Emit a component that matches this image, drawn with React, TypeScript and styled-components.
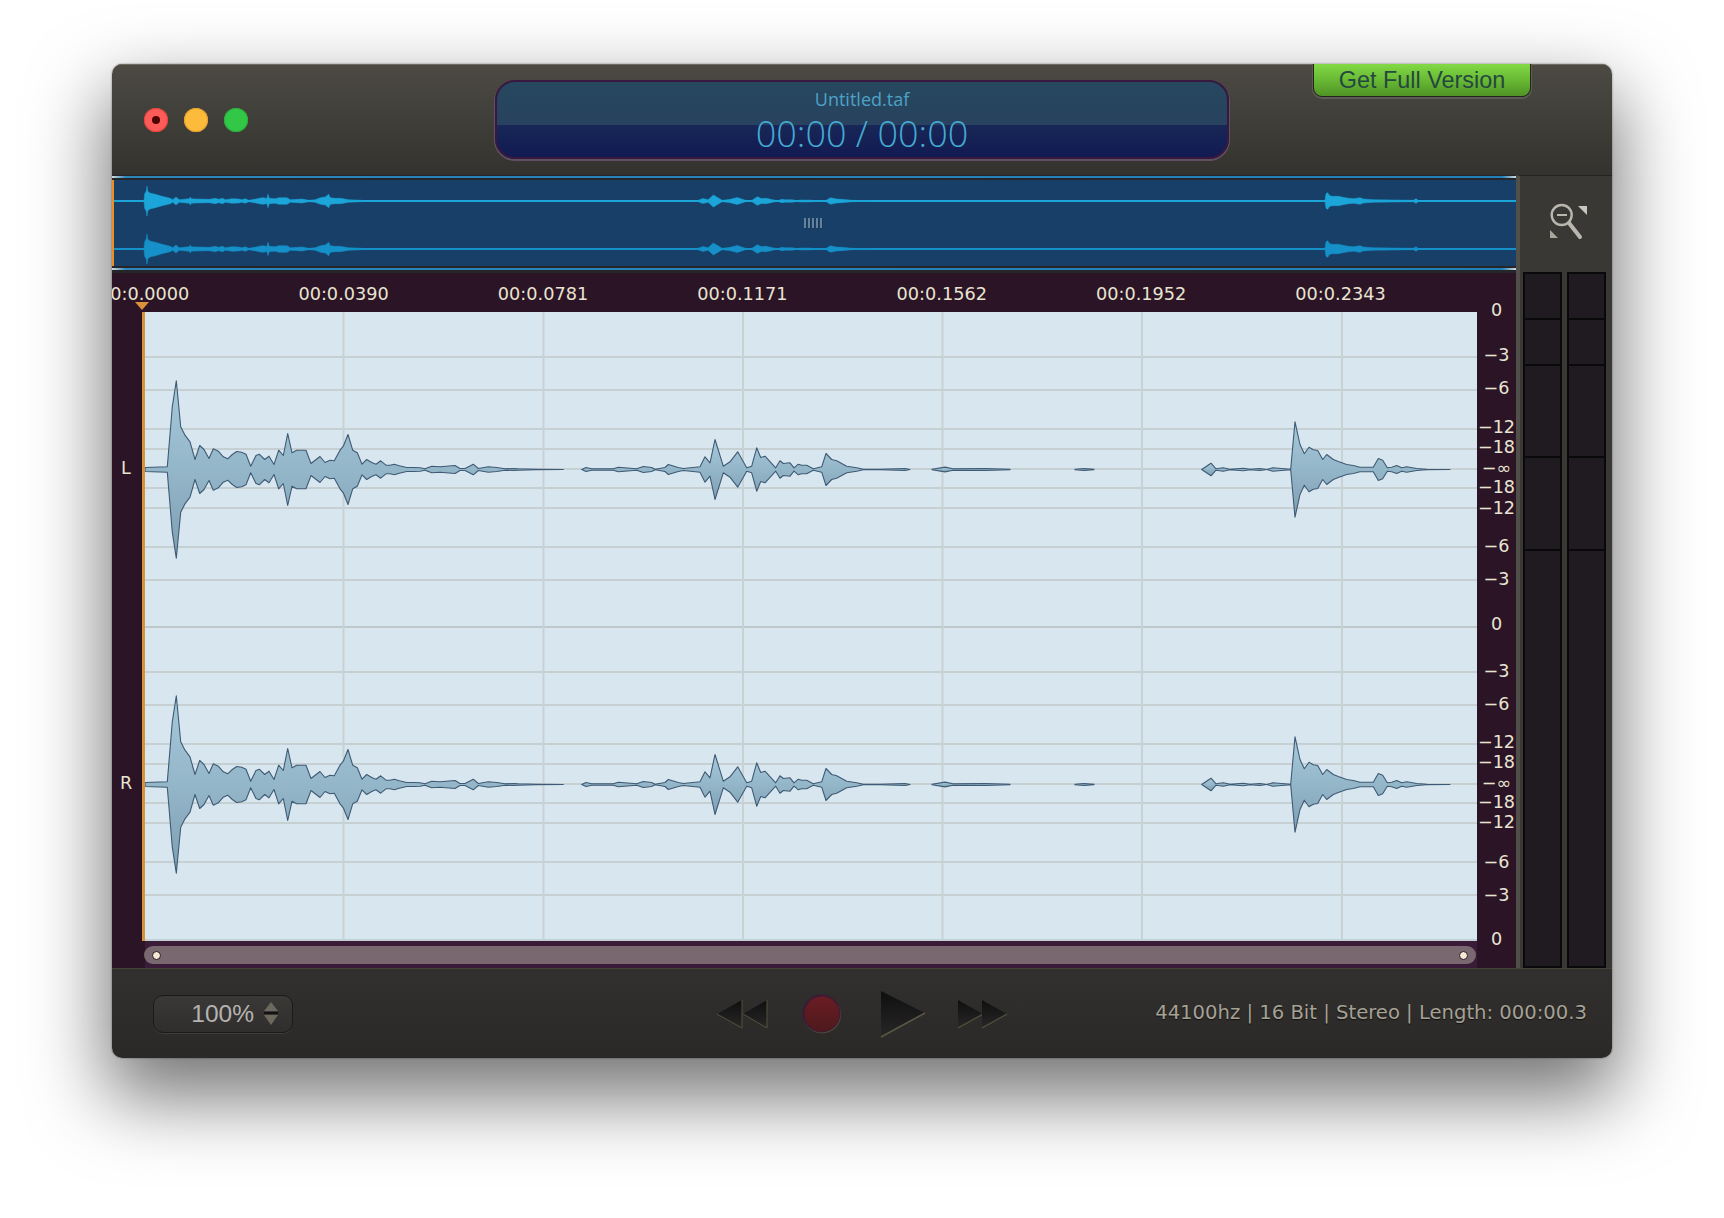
import React from 'react';
import styled, { createGlobalStyle } from 'styled-components';

const Global = createGlobalStyle`
  html, body { margin: 0; padding: 0; background: #fff; }
  #root { width: 1724px; height: 1218px; overflow: hidden; }
`;

const Page = styled.div`
  box-sizing: border-box;
  width: 1724px;
  height: 1218px;
  padding: 64px 112px;
  overflow: hidden;
  background: #fff;
`;

const Window = styled.div`
  width: 1500px;
  height: 994px;
  border-radius: 10px;
  overflow: hidden;
  display: flex;
  flex-direction: column;
  box-shadow: 0 34px 76px 6px rgba(0, 0, 0, 0.54), 0 0 2px rgba(0, 0, 0, 0.5);
  font-family: 'DejaVu Sans', sans-serif;
`;

const TitleBar = styled.header`
  flex: 0 0 111px;
  display: flex;
  background: linear-gradient(#4c4a43 0%, #45433d 30%, #34322e 100%);
  box-shadow: inset 0 1px 0 #6f6c64;
`;

const Lights = styled.div`
  display: flex;
  gap: 16px;
  padding: 44px 0 0 32px;
  width: 136px;
  box-sizing: content-box;
`;

const Light = styled.span<{ $c: string; $b: string }>`
  width: 24px;
  height: 24px;
  border-radius: 50%;
  background: ${(p) => p.$c};
  box-shadow: inset 0 0 0 1px ${(p) => p.$b};
  display: flex;
  align-items: center;
  justify-content: center;
`;

const LightDot = styled.i`
  width: 8px;
  height: 8px;
  border-radius: 50%;
  background: #4d0404;
`;

const Display = styled.div`
  box-sizing: border-box;
  width: 734px;
  height: 79px;
  margin: 16px 0 0 215px;
  border-radius: 20px;
  border: 2px solid #38183f;
  box-shadow: 0 1px 0 1px #5f5163;
  background: linear-gradient(#26485f 0%, #28425f 57%, #172757 57.5%, #121a52 100%);
  display: flex;
  flex-direction: column;
  align-items: center;
  overflow: hidden;
`;

const FileName = styled.div`
  margin-top: 7px;
  font: 18px/21px 'Open Sans', sans-serif;
  color: #4ea2c6;
`;

const TimeText = styled.div`
  margin-top: 2px;
  font: 300 36px/44px 'Open Sans', sans-serif;
  color: #45aad2;
`;

const FullButton = styled.div`
  box-sizing: border-box;
  width: 218px;
  height: 33px;
  margin-left: 84px;
  border: 1px solid #23241e;
  border-top: 0;
  border-radius: 0 0 9px 9px;
  box-shadow: 0 1px 0 1px #5d5b52;
  background: linear-gradient(#82d945 0%, #69b934 50%, #4f9326 100%);
  color: #24483f;
  font: 23.4px/33px 'Liberation Sans', sans-serif;
  text-align: center;
`;

const Middle = styled.div`
  flex: 0 0 793px;
  min-height: 0;
  display: flex;
`;

const MainCol = styled.div`
  width: 1404px;
  display: flex;
  flex-direction: column;
`;

const Overview = styled.div`
  flex: 0 0 98px;
  display: flex;
  flex-direction: column;
  background: #26262a;
  padding-top: 1px;
  box-sizing: border-box;
`;

const Rail = styled.div`
  flex: 0 0 2px;
  background: linear-gradient(90deg, #d5dadb 0, #2a86bb 14px, #2080b8 calc(100% - 14px), #d5dadb 100%);
`;

const OverviewBody = styled.div`
  position: relative;
  flex: 0 0 86px;
  margin: 2px 0;
  background: #183f68;
  border-left: 2px solid #f08c20;
`;

const Grip = styled.div`
  position: absolute;
  left: 690px;
  top: 38px;
  display: flex;
  gap: 2px;
`;

const GripBar = styled.i`
  width: 2px;
  height: 10px;
  background: #65829c;
  box-shadow: 1px 1px 0 #15375a;
`;

const OverviewSvg = styled.svg`
  display: block;
  width: 1402px;
  height: 86px;
`;

const Panel = styled.div`
  flex: 1;
  display: grid;
  grid-template-columns: 33px 1332px 39px;
  grid-template-rows: 39px 656px;
  background: #2a1425;
`;

const Ruler = styled.div`
  grid-column: 1 / 3;
  grid-row: 1;
  overflow: hidden;
  position: relative;
  display: flex;
  color: #e9e4d2;
  font-size: 17.7px;
  line-height: 39px;
`;

const Ticks = styled.div`
  display: flex;
  margin-left: -67.5px;
  padding-top: 2px;
`;

const Tick = styled.span`
  flex: 0 0 199.4px;
  text-align: center;
  white-space: nowrap;
`;

const PlayheadMark = styled.i`
  position: absolute;
  left: 23px;
  bottom: 2px;
  width: 0;
  height: 0;
  border-left: 7px solid transparent;
  border-right: 7px solid transparent;
  border-top: 8px solid #d9923a;
`;

const DbCol = styled.div`
  grid-column: 3;
  grid-row: 1 / 3;
  display: flex;
  flex-direction: column;
  align-items: center;
  padding-top: 27px;
  color: #e9e4d2;
  font-size: 17.6px;
`;

const DbLabel = styled.span`
  height: 20px;
  line-height: 20px;
  white-space: nowrap;
`;

const Gutter = styled.div`
  grid-column: 1;
  grid-row: 2;
  box-sizing: border-box;
  height: 629px;
  border-right: 3px solid #d9923a;
  display: flex;
  flex-direction: column;
  align-items: center;
  padding: 146px 2px 0 0;
  color: #e9e4d2;
  font-size: 17.6px;
  line-height: 20px;
`;

const ChannelLabel = styled.span<{ $gap?: number }>`
  margin-top: ${(p) => p.$gap ?? 0}px;
`;

const Center = styled.div`
  grid-column: 2;
  grid-row: 2;
  display: flex;
  flex-direction: column;
`;

const PlotSvg = styled.svg`
  display: block;
  width: 1332px;
  height: 629px;
  background: #d8e6ef;
`;

const ScrollTrack = styled.div`
  flex: 1;
  background: #3a1b38;
  padding: 5px 0 4px;
  box-sizing: border-box;
  display: flex;
`;

const ScrollThumb = styled.div`
  flex: 1;
  height: 18px;
  margin: 0 1px 0 -1px;
  border-radius: 9px;
  background: #7a6870;
  display: flex;
  justify-content: space-between;
  align-items: center;
  padding: 0 8px;
`;

const ThumbDot = styled.i`
  box-sizing: border-box;
  width: 9px;
  height: 9px;
  border-radius: 50%;
  background: #f5ead4;
  border: 1.5px solid #251420;
`;

const Side = styled.aside`
  width: 96px;
  box-sizing: border-box;
  background: #3a3835;
  border-left: 4px solid #514f49;
  border-top: 1px solid #24231f;
  display: flex;
  flex-direction: column;
  padding: 0 6px 0 3px;
`;

const ZoomBox = styled.div`
  flex: 0 0 96px;
  box-sizing: border-box;
  padding: 0 0 4px 7px;
  display: flex;
  align-items: center;
  justify-content: center;
`;

const Meters = styled.div`
  flex: 1;
  display: flex;
  gap: 5px;
`;

const Meter = styled.div`
  flex: 1;
  box-sizing: border-box;
  border: 2px solid #0a090a;
  display: flex;
  flex-direction: column;
  background: #0a090a;
  gap: 2px;
`;

const MeterSeg = styled.div<{ $h?: number }>`
  ${(p) => (p.$h ? `flex: 0 0 ${p.$h}px;` : 'flex: 1;')}
  background: #201b21;
`;

const BottomBar = styled.footer`
  flex: 0 0 90px;
  box-sizing: border-box;
  display: flex;
  align-items: center;
  background: linear-gradient(#31302e, #2a2927);
  border-top: 1px solid #45423a;
  padding: 0 25px 0 41px;
`;

const Stepper = styled.div`
  box-sizing: border-box;
  width: 140px;
  height: 38px;
  border-radius: 10px;
  border: 1px solid #1b1a19;
  background: linear-gradient(#3a3937, #2f2e2c);
  box-shadow: 0 1px 0 #3f3d39;
  color: #b5b3b0;
  font: 24.5px/36px 'Liberation Sans', sans-serif;
  display: flex;
  align-items: center;
  justify-content: flex-end;
  padding-right: 13px;
  gap: 9px;
`;

const Transport = styled.div`
  display: flex;
  align-items: center;
  margin-left: 423px;
  padding-top: 1px;
`;

const TransportIcon = styled.svg<{ $ml?: number }>`
  display: block;
  margin-left: ${(p) => p.$ml ?? 0}px;
`;

const Status = styled.div`
  margin-left: auto;
  margin-bottom: 2px;
  color: #a6a195;
  font-size: 19.6px;
  white-space: nowrap;
  text-shadow: 0 1px 1px #111;
`;

type P = [number, number];
const from = (x0: number, c: number, pts: number[][]): P[] =>
  pts.map(([x, y]) => [x0 + x / 3, (c - y) / 3]);

const envelope: P[] = [
  ...from(130, 298, [
    [45, 292], [112, 290], [127, 110], [139, 32], [152, 170], [165, 195], [180, 215], [195, 268], [209, 226], [222, 238],
    [237, 265], [250, 236], [265, 243], [280, 260], [293, 266], [307, 253], [320, 244], [335, 246], [348, 252], [362, 288],
    [378, 256], [388, 252], [404, 268], [417, 258], [432, 283], [446, 240], [460, 256], [473, 190], [486, 248], [500, 240],
    [528, 240], [543, 280], [570, 259], [585, 277], [600, 270], [613, 272], [630, 240], [640, 228], [654, 193], [668, 240],
    [682, 248], [696, 282], [710, 268], [725, 277], [738, 282], [752, 272], [768, 285], [780, 285], [793, 282], [808, 287],
    [830, 292], [850, 292], [870, 293], [885, 296], [905, 288], [930, 290], [975, 286], [990, 295], [1005, 295], [1030, 282],
    [1045, 295], [1075, 290], [1100, 292], [1125, 296], [1150, 295], [1165, 296],
  ]),
  ...from(530, 148, [
    [20, 147], [100, 148], [155, 148], [168, 142], [185, 146], [250, 146], [265, 141], [320, 146], [340, 139], [365, 142],
    [375, 147], [405, 142], [415, 133], [445, 142], [460, 145], [510, 140], [525, 110], [540, 128], [555, 58], [580, 138],
    [600, 125], [623, 95], [650, 143], [665, 138], [680, 83], [692, 112], [705, 108], [737, 143], [750, 122], [760, 130],
    [780, 128], [792, 143], [805, 132], [815, 135], [830, 135], [850, 146], [875, 140], [888, 100], [905, 118], [920, 122],
    [950, 138], [980, 143], [1000, 147], [1050, 147], [1125, 145], [1140, 148],
  ]),
  [932, 0.2], [945, 2.4], [953, 0.8], [985, 1], [1010, 0.2], [1075, 0.2], [1084, 1], [1094, 0.1],
  ...from(1150, 205, [
    [40, 205], [155, 205], [183, 186], [198, 203], [220, 200], [240, 204], [280, 201], [300, 204], [330, 202], [350, 205],
    [368, 200], [422, 204], [435, 62], [450, 130], [463, 158], [477, 138], [490, 146], [503, 148], [518, 175], [530, 160],
    [550, 175], [565, 181], [590, 190], [610, 193], [630, 198], [670, 198], [685, 172], [698, 177], [712, 200], [725, 198],
    [740, 193], [755, 200], [770, 197], [800, 202], [830, 204], [900, 205],
  ]),
];

// Visible runs of the trace: near-silent stretches are left out, so only the grid line shows there.
const audibleRuns = (pts: P[]): P[][] => {
  const runs: P[][] = [];
  let run: P[] = [];
  pts.forEach((p, i) => {
    if (p[1] > 0.3) {
      if (!run.length && i > 0) run.push(pts[i - 1]);
      run.push(p);
    } else if (run.length) {
      run.push(p);
      runs.push(run);
      run = [];
    }
  });
  if (run.length) runs.push(run);
  return runs;
};

const wavePoints = (pts: P[], map: (x: number) => number, cy: number, scale: number) => {
  const top = pts.map(([x, a]) => `${map(x).toFixed(1)},${(cy - a * scale).toFixed(1)}`);
  const bottom = [...pts].reverse().map(([x, a]) => `${map(x).toFixed(1)},${(cy + a * scale).toFixed(1)}`);
  return [...top, ...bottom].join(' ');
};

const plotX = (x: number) => x - 145;
const plotRuns = audibleRuns(envelope);

// The overview trace, in overview pixels from the left of its body.
const overviewStart: P[] = [
  [126, 90], [128, 70], [133, 62], [135, 47], [137, 62], [143, 68], [160, 72], [180, 78], [205, 84], [212, 88], [222, 80],
  [232, 88], [262, 85], [265, 80], [268, 85], [280, 86], [322, 87], [340, 84], [350, 87], [362, 84], [370, 88], [390, 85],
  [410, 86], [420, 88], [430, 85], [440, 90], [462, 86], [480, 82], [495, 84], [498, 72], [502, 84], [520, 85], [530, 82],
  [555, 82], [565, 88], [600, 86], [620, 90], [640, 88], [655, 82], [670, 80], [680, 72], [685, 82], [700, 84], [715, 84],
  [740, 88], [780, 90],
].map(([x, y]) => [(x - 36) / 3, (92 - y) / 3] as P);

const overviewMiddle: P[] = envelope
  .filter(([x]) => x > 690 && x < 880)
  .map(([x, a]) => [31 + (x - 176) * 1.0545, Math.min(a * 0.2, 8)] as P);

const overviewEnd: P[] = [
  [370, 452], [375, 450], [378, 430], [383, 427], [388, 435], [395, 438], [415, 438], [425, 440], [440, 443], [460, 445],
  [480, 442], [490, 446], [520, 448], [640, 450], [648, 445], [655, 450],
].map(([x, y]) => [1200 + x / 3 - 114, (452 - y) / 3] as P);

const overviewTrace = [overviewStart, overviewMiddle, overviewEnd];

const hLines = [45, 78, 117, 137, 157, 176, 196, 235, 268, 315, 360, 393, 432, 452, 472, 491, 511, 550, 583];
const vLines = [198.5, 398.5, 598, 797.5, 997, 1197];
const times = ['00:0.0000', '00:0.0390', '00:0.0781', '00:0.1171', '00:0.1562', '00:0.1952', '00:0.2343'];

const dbCenters: [string, number][] = [
  ['0', 309], ['−3', 354], ['−6', 387], ['−12', 426], ['−18', 446], ['−∞', 467], ['−18', 486], ['−12', 507], ['−6', 545],
  ['−3', 578], ['0', 623], ['−3', 670], ['−6', 703], ['−12', 741], ['−18', 761], ['−∞', 782], ['−18', 801], ['−12', 821],
  ['−6', 861], ['−3', 894], ['0', 938],
];

const meterSegments = [44, 44, 90, 91];

const App = () => (
  <Page>
    <Global />
    <Window>
      <TitleBar>
        <Lights>
          <Light $c="#fc5b57" $b="#e0443f">
            <LightDot />
          </Light>
          <Light $c="#fdbb3c" $b="#e2a02c" />
          <Light $c="#33c748" $b="#2aad3c" />
        </Lights>
        <Display>
          <FileName>Untitled.taf</FileName>
          <TimeText>00:00 / 00:00</TimeText>
        </Display>
        <FullButton>Get Full Version</FullButton>
      </TitleBar>

      <Middle>
        <MainCol>
          <Overview>
            <Rail />
            <OverviewBody>
              <OverviewSvg viewBox="0 0 1402 86">
                <rect x="0" y="20" width="1402" height="2" fill="#1ba5d8" />
                <rect x="0" y="68" width="1402" height="2" fill="#1590c8" />
                {overviewTrace.map((pts, i) => (
                  <React.Fragment key={i}>
                    <polygon points={wavePoints(pts, (x) => x, 21, 1)} fill="#1ba5d8" stroke="#1ba5d8" strokeWidth="0.5" />
                    <polygon points={wavePoints(pts, (x) => x, 69, 1)} fill="#1590c8" stroke="#1590c8" strokeWidth="0.5" />
                  </React.Fragment>
                ))}
              </OverviewSvg>
              <Grip>
                {[0, 1, 2, 3, 4].map((i) => (
                  <GripBar key={i} />
                ))}
              </Grip>
            </OverviewBody>
            <Rail />
          </Overview>

          <Panel>
            <Ruler>
              <Ticks>
                {times.map((t) => (
                  <Tick key={t}>{t}</Tick>
                ))}
              </Ticks>
              <PlayheadMark />
            </Ruler>

            <Gutter>
              <ChannelLabel>L</ChannelLabel>
              <ChannelLabel $gap={295}>R</ChannelLabel>
            </Gutter>

            <Center>
              <PlotSvg viewBox="0 0 1332 629">
                <defs>
                  <linearGradient id="waveL" x1="0" y1="0" x2="0" y2="1">
                    <stop offset="0" stopColor="#a6c8da" />
                    <stop offset="0.5" stopColor="#94b6c9" />
                    <stop offset="1" stopColor="#7f9fb3" />
                  </linearGradient>
                </defs>
                {hLines.map((y) => (
                  <rect key={y} x="0" y={y - 1} width="1332" height="2" fill={y === 315 ? '#bfc9cc' : '#c6cfd2'} />
                ))}
                {vLines.map((x) => (
                  <rect key={x} x={x - 1} y="0" width="2" height="629" fill="#c8d2d4" />
                ))}
                <rect x="0" y="627" width="1332" height="2" fill="#c3d0d6" />
                {[157.5, 472.5].map((cy) =>
                  plotRuns.map((run, i) => (
                    <polygon
                      key={`${cy}-${i}`}
                      points={wavePoints(run, plotX, cy, 1)}
                      fill="url(#waveL)"
                      stroke="#3f5a74"
                      strokeWidth="1.1"
                      strokeLinejoin="round"
                    />
                  )),
                )}
              </PlotSvg>
              <ScrollTrack>
                <ScrollThumb>
                  <ThumbDot />
                  <ThumbDot />
                </ScrollThumb>
              </ScrollTrack>
            </Center>

            <DbCol>
              {dbCenters.map(([t, c], i) => (
                <DbLabel key={i} style={{ marginTop: i === 0 ? 0 : c - dbCenters[i - 1][1] - 20 }}>
                  {t}
                </DbLabel>
              ))}
            </DbCol>
          </Panel>
        </MainCol>

        <Side>
          <ZoomBox>
            <svg width="40" height="40" viewBox="0 0 40 40" aria-label="Zoom out">
              <circle cx="13.7" cy="13" r="10" fill="none" stroke="#b9b6ae" strokeWidth="2.4" />
              <rect x="9" y="12" width="10" height="2" fill="#b9b6ae" />
              <line x1="21" y1="21" x2="32" y2="35" stroke="#b9b6ae" strokeWidth="4" strokeLinecap="round" />
              <polygon points="30,4 39,4 39,13" fill="#c9c6be" />
              <polygon points="2,28 2,36 10,36" fill="#a9a69e" />
            </svg>
          </ZoomBox>
          <Meters>
            {[0, 1].map((m) => (
              <Meter key={m}>
                {meterSegments.map((h, i) => (
                  <MeterSeg key={i} $h={h} />
                ))}
                <MeterSeg />
              </Meter>
            ))}
          </Meters>
        </Side>
      </Middle>

      <BottomBar>
        <Stepper>
          100%
          <svg width="16" height="24" viewBox="0 0 16 24">
            <polygon points="8,0 15,9 1,9" fill="#6d695e" />
            <rect x="1" y="10" width="14" height="2" fill="#141312" />
            <polygon points="1,13 15,13 8,23" fill="#6d695e" />
          </svg>
        </Stepper>
        <Transport>
          <TransportIcon width="52" height="30" viewBox="0 0 52 30">
            <defs>
              <linearGradient id="tri" x1="0" y1="0" x2="0" y2="1">
                <stop offset="0" stopColor="#0f0f0f" />
                <stop offset="1" stopColor="#272727" />
              </linearGradient>
            </defs>
            <polygon points="1,15 26,1 26,29" fill="url(#tri)" />
            <polyline points="1,15 26,29 26,1" fill="none" stroke="#55513f" strokeWidth="1" />
            <polygon points="27,15 51,1 51,29" fill="url(#tri)" />
            <polyline points="27,15 51,29 51,1" fill="none" stroke="#55513f" strokeWidth="1" />
          </TransportIcon>
          <TransportIcon $ml={34} width="40" height="40" viewBox="0 0 40 40">
            <defs>
              <linearGradient id="rec" x1="0" y1="0" x2="0" y2="1">
                <stop offset="0" stopColor="#6a1c24" />
                <stop offset="1" stopColor="#4e1a1c" />
              </linearGradient>
            </defs>
            <circle cx="20" cy="20.5" r="19" fill="#4f4b40" />
            <circle cx="19.5" cy="19.5" r="19" fill="#3c1a36" />
            <circle cx="20" cy="20" r="17.5" fill="url(#rec)" />
          </TransportIcon>
          <TransportIcon $ml={38} width="46" height="48" viewBox="0 0 46 48">
            <polygon points="1,1 45,23 1,47" fill="url(#tri)" />
            <polyline points="45,23 1,47" fill="none" stroke="#5c5744" strokeWidth="1.6" />
          </TransportIcon>
          <TransportIcon $ml={31} width="52" height="30" viewBox="0 0 52 30">
            <polygon points="1,1 26,15 1,29" fill="url(#tri)" />
            <polyline points="26,15 1,29" fill="none" stroke="#55513f" strokeWidth="1.2" />
            <polygon points="25,1 50,15 25,29" fill="url(#tri)" />
            <polyline points="50,15 25,29" fill="none" stroke="#55513f" strokeWidth="1.2" />
          </TransportIcon>
        </Transport>
        <Status>44100hz | 16 Bit | Stereo | Length: 000:00.3</Status>
      </BottomBar>
    </Window>
  </Page>
);

export default App;
